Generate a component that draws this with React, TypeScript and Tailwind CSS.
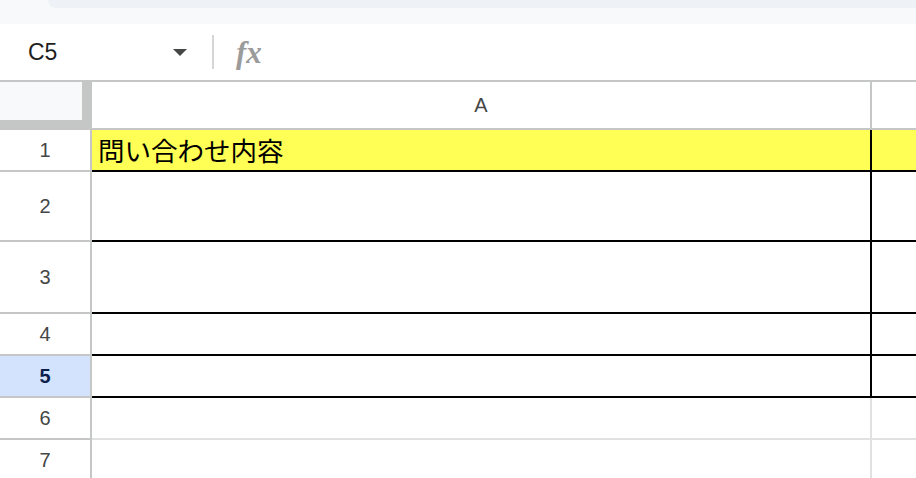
const rows = [
  { n: 1, h: 'h-[40px]', line: 'border-black', vline: 'border-black', fill: 'bg-[#ffff55]', text: '問い合わせ内容' },
  { n: 2, h: 'h-[68px]', line: 'border-black', vline: 'border-black' },
  { n: 3, h: 'h-[70px]', line: 'border-black', vline: 'border-black' },
  { n: 4, h: 'h-[40px]', line: 'border-black', vline: 'border-black' },
  { n: 5, h: 'h-[40px]', line: 'border-black', vline: 'border-black', active: true },
  { n: 6, h: 'h-[40px]', line: 'border-[#e1e1e1]', vline: 'border-[#e1e1e1]' },
  { n: 7, h: 'h-[40px]', line: 'border-[#e1e1e1]', vline: 'border-[#e1e1e1]' },
]

export default function App() {
  return (
    <div className="w-[916px] h-[478px] overflow-hidden bg-white font-['Liberation_Sans',Arial,sans-serif]">
      {/* top strip */}
      <div className="h-[24px] bg-[#f8f9fb]">
        <div className="ml-[48px] h-[8px] bg-[#eef1f6] rounded-bl-[22px]" />
      </div>

      {/* formula bar */}
      <div className="h-[58px] flex items-center border-b-2 border-[#c4c7c5]">
        <div className="w-[173px] pl-[28px] text-[23px] text-[#1f1f1f] leading-none">C5</div>
        <div className="w-0 h-0 border-l-[7px] border-r-[7px] border-t-[7px] border-l-transparent border-r-transparent border-t-[#444746]" />
        <div className="ml-[25px] w-[2px] h-[34px] bg-[#d5d5d5]" />
        <div className="ml-[22px] text-[31px] leading-none text-[#9b9b9b] italic font-bold font-['Liberation_Serif',serif]">
          fx
        </div>
      </div>

      {/* column header */}
      <div className="flex">
        <div className="w-[92px] h-[48px] bg-[#c4c7c5]">
          <div className="w-[82px] h-[38px] bg-[#f8f9fa]" />
        </div>
        <div className="w-[780px] h-[48px] border-r-2 border-b-2 border-[#c4c7c5] flex items-center justify-center text-[20px] text-[#444746]">
          A
        </div>
        <div className="flex-1 h-[48px] border-b-2 border-[#c4c7c5]" />
      </div>

      {/* rows */}
      {rows.map((r) => (
        <div key={r.n} className="flex">
          <div
            className={`w-[90px] ${r.h} box-content border-r-2 border-b-2 border-[#c4c7c5] flex items-center justify-center text-[20px] ${
              r.active ? 'bg-[#d3e3fd] font-bold text-[#0b1f4d]' : 'bg-white text-[#444746]'
            }`}
          >
            {r.n}
          </div>
          <div className={`w-[772px] ${r.h} box-content border-b-2 ${r.line} ${r.fill ?? ''} flex items-center pl-[6px]`}>
            {r.text && (
              <span className="text-[26.5px] text-black leading-none font-['Noto_Sans_CJK_JP',sans-serif]">{r.text}</span>
            )}
          </div>
          <div className={`${r.h} box-content border-l-2 ${r.vline} border-b-2 ${r.line} ${r.fill ?? ''} flex-1`} />
        </div>
      ))}
    </div>
  )
}
